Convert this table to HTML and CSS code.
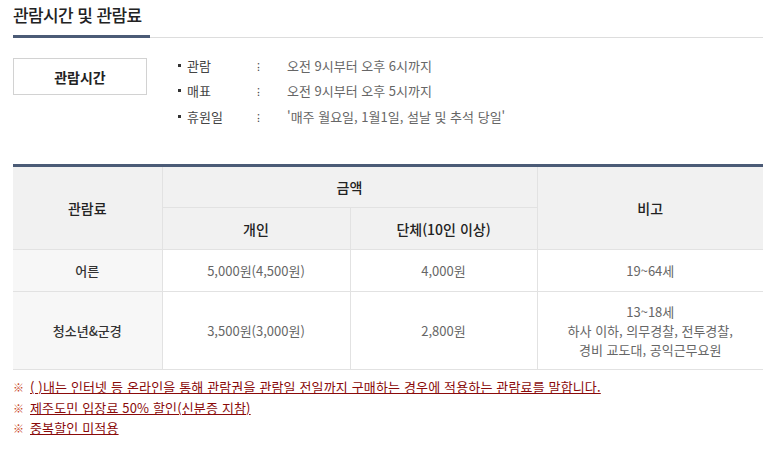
FILE: index.html
```html
<!DOCTYPE html>
<html lang="ko">
<head>
<meta charset="utf-8">
<link rel="stylesheet" href="styles.css">
</head>
<body>
<div class="page">
  <div class="title-wrap"><h2 class="title">관람시간 및 관람료</h2></div>
  <div class="hours">
    <div class="hours-box">관람시간</div>
    <ul class="hours-list">
      <li><span class="lbl">관람</span><span class="sep">⁝</span><span class="val">오전 9시부터 오후 6시까지</span></li>
      <li><span class="lbl">매표</span><span class="sep">⁝</span><span class="val">오전 9시부터 오후 5시까지</span></li>
      <li><span class="lbl">휴원일</span><span class="sep">⁝</span><span class="val">'매주 월요일, 1월1일, 설날 및 추석 당일'</span></li>
    </ul>
  </div>
  <table class="fee">
    <colgroup><col class="c1"><col class="c2"><col class="c3"><col class="c4"></colgroup>
    <thead>
      <tr class="h1"><th rowspan="2">관람료</th><th colspan="2">금액</th><th rowspan="2">비고</th></tr>
      <tr class="h2"><th>개인</th><th>단체(10인 이상)</th></tr>
    </thead>
    <tbody>
      <tr class="r1"><th>어른</th><td>5,000원(4,500원)</td><td>4,000원</td><td>19~64세</td></tr>
      <tr class="r2"><th>청소년&amp;군경</th><td>3,500원(3,000원)</td><td>2,800원</td><td>13~18세<br>하사 이하, 의무경찰, 전투경찰,<br>경비 교도대, 공익근무요원</td></tr>
    </tbody>
  </table>
  <ul class="notes">
    <li><span class="mark">※</span><span class="ntext">( )내는 인터넷 등 온라인을 통해 관람권을 관람일 전일까지 구매하는 경우에 적용하는 관람료를 말합니다.</span></li>
    <li><span class="mark">※</span><span class="ntext">제주도민 입장료 50% 할인(신분증 지참)</span></li>
    <li><span class="mark">※</span><span class="ntext">중복할인 미적용</span></li>
  </ul>
</div>
</body>
</html>
```

FILE: styles.css
```css
* { box-sizing: border-box; }
html, body { margin: 0; padding: 0; background: #fff; }
body {
  font-family: "Noto Sans CJK KR", "Noto Sans", sans-serif;
  font-size: 13px;
  color: #333;
}
.page { padding: 0 13px; width: 776px; }
.title-wrap {
  border-bottom: 1px solid #ddd;
  height: 38px;
}
.title {
  display: inline-block;
  margin: 0;
  padding: 3px 0 0 0;
  height: 38px;
  width: 137px;
  white-space: nowrap;
  border-bottom: 3px solid #4b5b76;
  font-size: 17px;
  font-weight: 500;
  color: #222;
  line-height: 24px;
  letter-spacing: -0.6px;
}
.hours {
  display: flex;
  margin-top: 20px;
  height: 106px;
}
.hours-box {
  width: 134px;
  height: 37px;
  border: 1px solid #d2d2d2;
  display: flex;
  align-items: center;
  justify-content: center;
  font-weight: 700;
  font-size: 14px;
  color: #222;
}
.hours-list {
  list-style: none;
  margin: -5px 0 0 31px;
  padding: 0;
}
.hours-list li {
  display: flex;
  align-items: center;
  height: 25px;
  position: relative;
  padding-left: 9px;
  font-size: 13px;
}
.hours-list li::before {
  content: "";
  position: absolute;
  left: 0;
  top: 11px;
  width: 3px;
  height: 3px;
  background: #333;
}
.hours-list li:nth-child(3) { margin-top: 1px; }
.lbl { width: 70px; color: #444; }
.sep { width: 30px; color: #444; font-size: 11px; }
.val { color: #666; }

.fee {
  width: 750px;
  border-collapse: collapse;
  border-top: 3px solid #4b5b76;
  border-bottom: 1px solid #e2e2e2;
  font-size: 13px;
}
.fee .c1 { width: 149px; }
.fee .c2 { width: 188px; }
.fee .c3 { width: 187px; }
.fee .c4 { width: 226px; }
.fee th, .fee td {
  border: 1px solid #e2e2e2;
  text-align: center;
  vertical-align: middle;
  padding: 0;
}
.fee tr > :first-child { border-left: none; }
.fee tr > :last-child { border-right: none; }
.fee thead th {
  background: #f1f1f1;
  font-weight: 500;
  color: #222;
  font-size: 14px;
}
.fee .h1 th { height: 42px; }
.fee .h2 th { height: 42px; }
.fee tbody th {
  background: #f7f7f7;
  font-weight: 500;
  color: #333;
}
.fee tbody td { color: #666; line-height: 19px; }
.fee .r1 > * { height: 42px; }
.fee .r2 > * { height: 78px; }

.notes {
  list-style: none;
  margin: 6px 0 0 0;
  padding: 0;
  font-size: 13px;
}
.notes li { height: 21px; line-height: 21px; }
.notes li:nth-child(3) { margin-top: -1px; }
.mark { color: #c8461f; margin-right: 6px; font-size: 11px; }
.ntext {
  color: #8a0a0a;
  text-decoration: underline;
  letter-spacing: 0.15px;
}
```
